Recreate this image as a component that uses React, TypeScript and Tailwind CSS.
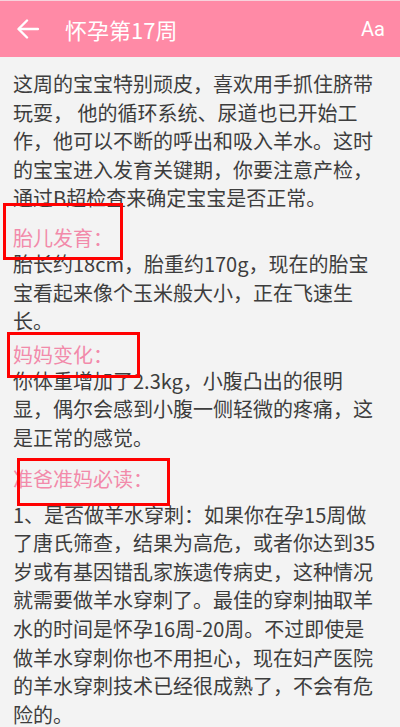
import React from 'react';

const FONT = { fontFamily: '"Noto Sans CJK SC", "Noto Sans", sans-serif' };

// 每一段按截图里的换行拆成单独的行
const intro = [
    '这周的宝宝特别顽皮，喜欢用手抓住脐带',
    '玩耍， 他的循环系统、尿道也已开始工',
    '作，他可以不断的呼出和吸入羊水。这时',
    '的宝宝进入发育关键期，你要注意产检，',
    '通过B超检查来确定宝宝是否正常。',
];

const fetal = [
    '胎长约18cm，胎重约170g，现在的胎宝',
    '宝看起来像个玉米般大小，正在飞速生',
    '长。',
];

const mom = [
    '你体重增加了2.3kg，小腹凸出的很明',
    '显，偶尔会感到小腹一侧轻微的疼痛，这',
    '是正常的感觉。',
];

const mustRead = [
    '1、是否做羊水穿刺：如果你在孕15周做',
    '了唐氏筛查，结果为高危，或者你达到35',
    '岁或有基因错乱家族遗传病史，这种情况',
    '就需要做羊水穿刺了。最佳的穿刺抽取羊',
    '水的时间是怀孕16周-20周。不过即使是',
    '做羊水穿刺你也不用担心，现在妇产医院',
    '的羊水穿刺技术已经很成熟了，不会有危',
    '险的。',
];

const Lines: React.FC<{ lines: string[] }> = ({ lines }) => (
    <div className="text-[20px] leading-[28.6px] text-[#3d3d3d]">
        {lines.map((l, i) => (
            <div key={i} className="whitespace-nowrap">{l}</div>
        ))}
    </div>
);

const Heading: React.FC<{ text: string; className: string; boxClass: string }> = ({ text, className, boxClass }) => (
    <div className={`relative text-[20px] leading-6 text-[#f28aaa] ${className}`}>
        {text}
        {/* 截图上的红色标注框 */}
        <span className={`absolute border-[3px] border-[#ff0000] ${boxClass}`} />
    </div>
);

export default function App() {
    return (
        <div className="w-[400px] h-[727px] overflow-hidden bg-[#f3f3f3] flex flex-col" style={FONT}>
            {/* 顶部栏 */}
            <div className="h-[57px] shrink-0 bg-[#ff8aa6] border-t border-[#f7d3dc] flex items-center pl-[17px] pr-[15px]">
                <svg width="22" height="20" viewBox="0 0 22 20" fill="none" stroke="white" strokeWidth="2.4" strokeLinecap="round" strokeLinejoin="round" className="shrink-0">
                    <path d="M21 10H2" />
                    <path d="M10 1.5 1.5 10 10 18.5" />
                </svg>
                <span className="ml-[26px] text-[22px] text-white leading-none">怀孕第17周</span>
                <span className="ml-auto text-[20px] text-white leading-none" style={{ fontFamily: 'Roboto, sans-serif' }}>Aa</span>
            </div>

            {/* 正文 */}
            <div className="pt-[13px] px-[13px]">
                <Lines lines={intro} />
                <Heading text="胎儿发育：" className="mt-[13px]" boxClass="-left-[10px] -top-[23px] w-[120px] h-[57px]" />
                <Lines lines={fetal} />
                <Heading text="妈妈变化：" className="mt-[7px]" boxClass="-left-[6px] -top-[11px] w-[133px] h-[46px]" />
                <Lines lines={mom} />
                <Heading text="准爸准妈必读：" className="mt-[14px] mb-[10px]" boxClass="left-[4px] -top-[9px] w-[153px] h-[48px]" />
                <Lines lines={mustRead} />
            </div>
        </div>
    );
}
